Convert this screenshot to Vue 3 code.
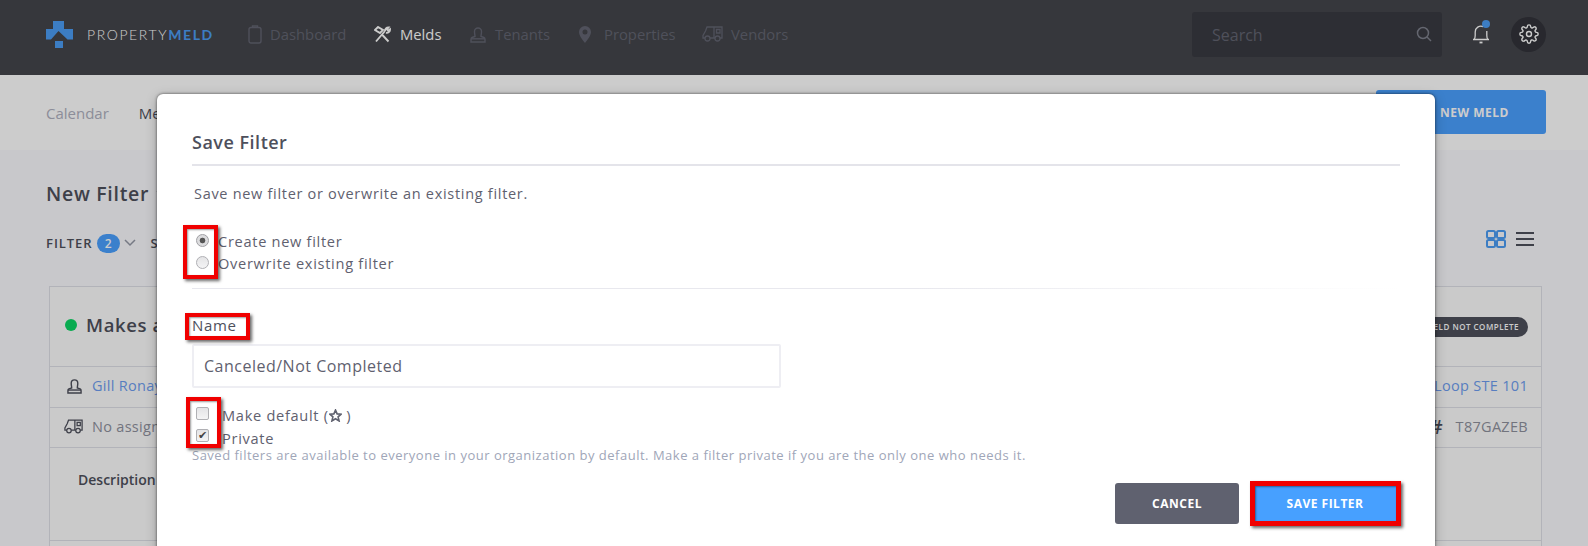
<script setup>
const nav = [
  { label: 'Dashboard', icon: 'clip', active: false },
  { label: 'Melds', icon: 'tools', active: true },
  { label: 'Tenants', icon: 'person', active: false },
  { label: 'Properties', icon: 'pin', active: false },
  { label: 'Vendors', icon: 'truck', active: false }
]
</script>

<template>
  <div class="screen">
    <header class="topbar">
      <div class="brand">
        <svg class="logo" width="27" height="27" viewBox="0 0 27 27">
          <path fill="#4c9df4" d="M7 0h11v8l9 0v10.500h-5.500L12.500 10 5 18.500H0V8h7z" />
          <path fill="#4c9df4" d="M9 20h8v7H9z" />
        </svg>
        <span class="wordmark">PROPERTY<b>MELD</b></span>
      </div>
      <nav class="mainnav">
        <a v-for="item in nav" :key="item.label" class="navlink" :class="[{ active: item.active }, 'nav-' + item.icon]">
          <svg v-if="item.icon === 'clip'" width="14" height="19" viewBox="0 0 14 19" fill="none" stroke="currentColor" stroke-width="1.400">
            <rect x="1" y="2.500" width="12" height="15.500" rx="2" /><path d="M4.500 2.500V1h5v1.500" />
          </svg>
          <svg v-else-if="item.icon === 'tools'" width="17" height="17" viewBox="0 0 17 17" fill="none" stroke="currentColor" stroke-width="1.900">
            <path d="M2 15.500 11 5M1 4l3-3 5 3-3 3zM14.500 15.500 7.500 8M11 5c0-2 1.500-3.500 3.500-3.500L13 3.500 14.200 4.800 16 3.300c.2 2.200-2 4-4 3.400" />
          </svg>
          <svg v-else-if="item.icon === 'person'" width="16" height="17" viewBox="0 0 16 17" fill="none" stroke="currentColor" stroke-width="1.400">
            <path d="M5 10.500c0-1.500-.5-2.500-.5-5a3.500 3.500 0 0 1 7 0c0 2.500-.5 3.500-.5 5l3 1c.9.300 1 1 1 2V16H1v-2.500c0-1 .1-1.700 1-2z" />
            <path d="M1 12.800h14" />
          </svg>
          <svg v-else-if="item.icon === 'pin'" width="12" height="17" viewBox="0 0 12 17">
            <path fill="currentColor" fill-rule="evenodd" d="M6 0a6 6 0 0 1 6 6c0 3.500-3.500 8-6 11C3.500 14 0 9.500 0 6a6 6 0 0 1 6-6zm0 3.500a2.500 2.500 0 1 0 0 5 2.500 2.500 0 0 0 0-5z" />
          </svg>
          <svg v-else width="21" height="16" viewBox="0 0 21 16" fill="none" stroke="currentColor" stroke-width="1.300">
            <path d="M3 12H1v-2.500L3.500 5l1.500-4h7v11H8M12 12h1M18 12h2V1h-8" />
            <circle cx="5.500" cy="12.500" r="2.500" /><circle cx="15.500" cy="12.500" r="2.500" />
            <path d="M14.500 3.500H18V7h-3.500z" />
          </svg>
          <span>{{ item.label }}</span>
        </a>
      </nav>
      <div class="search">
        <span>Search</span>
        <svg width="16" height="16" viewBox="0 0 16 16" fill="none" stroke="#7d808c" stroke-width="1.500">
          <circle cx="7" cy="7" r="5.500" /><path d="M11 11l4 4" />
        </svg>
      </div>
      <div class="bell">
        <svg width="18" height="22" viewBox="0 0 18 22" fill="none" stroke="#ffffff" stroke-width="1.300">
          <path d="M2 16.500c1-1 1.200-2 1.200-4V9a5.800 5.800 0 0 1 8-5.400M14.800 8v4.500c0 2 .2 3 1.200 4M1 16.500h16" />
          <path d="M7.500 19.500h3" stroke-width="1.800" />
        </svg>
        <i class="dot"></i>
      </div>
      <div class="gear">
        <svg width="20" height="20" viewBox="0 0 24 24" fill="none" stroke="#ffffff" stroke-width="1.700" stroke-linejoin="round">
          <circle cx="12" cy="12" r="3" />
          <path d="M19.400 15a1.700 1.700 0 0 0 .3 1.800l.1.100a2 2 0 1 1-2.800 2.800l-.1-.1a1.700 1.700 0 0 0-2.900 1.200V21a2 2 0 1 1-4 0v-.1a1.700 1.700 0 0 0-2.900-1.200l-.1.100a2 2 0 1 1-2.800-2.800l.1-.1a1.700 1.700 0 0 0-1.200-2.900H3a2 2 0 1 1 0-4h.1a1.700 1.700 0 0 0 1.200-2.900l-.1-.1a2 2 0 1 1 2.800-2.800l.1.100a1.700 1.700 0 0 0 1.900.3H9a1.700 1.700 0 0 0 1-1.500V3a2 2 0 1 1 4 0v.1a1.700 1.700 0 0 0 2.900 1.200l.1-.1a2 2 0 1 1 2.800 2.800l-.1.100a1.700 1.700 0 0 0-.3 1.900V9a1.700 1.700 0 0 0 1.500 1H21a2 2 0 1 1 0 4h-.1a1.700 1.700 0 0 0-1.500 1z" />
        </svg>
      </div>
    </header>

    <div class="subbar">
      <a class="sublink">Calendar</a>
      <a class="sublink current">Melds</a>
      <button class="newmeld">NEW MELD</button>
    </div>

    <main class="page">
      <div class="titlerow">
        <h2 class="pagetitle">New Filter</h2>
        <svg width="12" height="8" viewBox="0 0 12 8" fill="none" stroke="#9498a6" stroke-width="1.500"><path d="M1 1l5 5 5-5" /></svg>
      </div>
      <div class="tools">
        <span class="filter">FILTER</span>
        <span class="count">2</span>
        <svg width="12" height="8" viewBox="0 0 12 8" fill="none" stroke="#9498a6" stroke-width="1.500"><path d="M1 1l5 5 5-5" /></svg>
        <span class="filter sort">SORT</span>
        <svg class="grid" width="20" height="18" viewBox="0 0 20 18" fill="none" stroke="#4c9df4" stroke-width="2">
          <rect x="1" y="1" width="8" height="7" rx="1.500" /><rect x="11" y="1" width="8" height="7" rx="1.500" />
          <rect x="1" y="10" width="8" height="7" rx="1.500" /><rect x="11" y="10" width="8" height="7" rx="1.500" />
        </svg>
        <svg class="lines" width="18" height="14" viewBox="0 0 18 14" stroke="#4e505c" stroke-width="2"><path d="M0 1h18M0 7h18M0 13h18" /></svg>
      </div>
      <section class="card">
        <div class="cardhead">
          <i class="status"></i>
          <span class="cardtitle">Makes a</span>
          <span class="pill">MELD NOT COMPLETE</span>
        </div>
        <div class="cardrow">
          <svg width="15" height="16" viewBox="0 0 16 17" fill="none" stroke="#4e505c" stroke-width="1.500">
            <path d="M5 10.500c0-1.500-.5-2.500-.5-5a3.500 3.500 0 0 1 7 0c0 2.500-.5 3.500-.5 5l3 1c.9.300 1 1 1 2V16H1v-2.500c0-1 .1-1.700 1-2z" /><path d="M1 12.800h14" />
          </svg>
          <a class="rowlink">Gill Ronay</a>
          <a class="rowlink end">1200 Loop STE 101</a>
        </div>
        <div class="cardrow">
          <svg class="van" width="19" height="15" viewBox="0 0 21 16" fill="none" stroke="#4e505c" stroke-width="1.400">
            <path d="M3 12H1v-2.500L3.500 5l1.500-4h7v11H8M12 12h1M18 12h2V1h-8" />
            <circle cx="5.500" cy="12.500" r="2.500" /><circle cx="15.500" cy="12.500" r="2.500" />
            <path d="M14.500 3.500H18V7h-3.500z" />
          </svg>
          <span class="rowmuted">No assigned vendor</span>
          <span class="hash">#</span>
          <span class="ref">T87GAZEB</span>
        </div>
        <div class="carddesc">Description</div>
      </section>
    </main>

    <div class="overlay"></div>

    <div class="modal">
      <h3 class="modaltitle">Save Filter</h3>
      <p class="intro">Save new filter or overwrite an existing filter.</p>
      <div class="choices">
        <label class="choice"><input type="radio" name="mode" checked /><span>Create new filter</span></label>
        <label class="choice"><input type="radio" name="mode" /><span>Overwrite existing filter</span></label>
      </div>
      <div class="fade"></div>
      <label class="namelabel">Name</label>
      <input class="nameinput" type="text" value="Canceled/Not Completed" />
      <div class="checks">
        <label class="check">
          <input type="checkbox" />
          <span>Make default (<svg class="star" width="13" height="13" viewBox="0 0 24 24" fill="none" stroke="#5f616f" stroke-width="3"><path d="M12 2l3 7 7.500.6-5.700 4.900 1.800 7.500L12 18l-6.600 4 1.800-7.500L1.500 9.600 9 9z" /></svg> )</span>
        </label>
        <label class="check">
          <input type="checkbox" checked />
          <span>Private</span>
        </label>
      </div>
      <p class="help">Saved filters are available to everyone in your organization by default. Make a filter private if you are the only one who needs it.</p>
      <div class="actions">
        <button class="btn cancel">CANCEL</button>
        <button class="btn save">SAVE FILTER</button>
      </div>
      <i class="mark mark-radio"></i>
      <i class="mark mark-name"></i>
      <i class="mark mark-check"></i>
      <i class="mark mark-save"></i>
    </div>
  </div>
</template>

<style>
html, body { margin: 0; padding: 0; background: #fff; }
</style>

<style scoped>
.screen {
  position: relative;
  width: 1588px;
  height: 546px;
  overflow: hidden;
  background: #fafbfe;
  font-family: "Open Sans", "Noto Sans", sans-serif;
  color: #5f616f;
}
.topbar {
  display: flex;
  align-items: center;
  height: 75px;
  padding: 0 42px 7px 46px;
  box-sizing: border-box;
  background: #44454b;
}
.brand { display: flex; align-items: center; width: 202px; }
.logo { display: block; margin-right: 14px; }
.wordmark {
  font-family: Lato, sans-serif;
  font-size: 14px;
  letter-spacing: 1.600px;
  color: #ffffff;
  font-weight: 300;
}
.wordmark b { color: #4c9df4; font-weight: 700; }
.mainnav { display: flex; align-items: center; flex: 1; }
.navlink {
  display: flex;
  align-items: center;
  font-size: 14.800px;
  color: #636572;
}
.navlink.active { color: #ffffff; }
.nav-clip { width: 126px; }
.nav-clip svg { margin-right: 8px; }
.nav-tools { width: 96px; }
.nav-tools svg { margin-right: 9px; }
.nav-person { width: 109px; }
.nav-person svg { margin-right: 9px; }
.nav-pin { width: 123px; }
.nav-pin svg { margin-right: 13px; }
.nav-truck svg { margin-right: 8px; }
.search {
  display: flex;
  align-items: center;
  justify-content: space-between;
  width: 250px;
  height: 45px;
  padding: 0 10px 0 20px;
  box-sizing: border-box;
  background: #393a41;
  border-radius: 3px;
  font-size: 16px;
  color: #636572;
  margin-right: 30px;
}
.search span { margin-top: 2px; }
.bell { position: relative; width: 18px; height: 22px; margin-right: 21px; }
.bell svg { display: block; }
.dot {
  position: absolute;
  top: -3px;
  right: 0;
  width: 8px;
  height: 8px;
  border-radius: 50%;
  background: #4c9df4;
}
.gear {
  display: flex;
  align-items: center;
  justify-content: center;
  width: 35px;
  height: 35px;
  border-radius: 50%;
  background: #32333a;
}
.subbar {
  display: flex;
  align-items: center;
  height: 75px;
  padding: 0 42px 0 46px;
  box-sizing: border-box;
  background: #ffffff;
}
.sublink { font-size: 15px; color: #afb1c0; margin-right: 30px; }
.sublink.current { color: #4e505c; }
.newmeld {
  margin-left: auto;
  margin-top: -1px;
  width: 170px;
  height: 44px;
  border: 0;
  border-radius: 3px;
  background: #4aa0ff;
  color: #fff;
  font: 700 12px "Open Sans", sans-serif;
  letter-spacing: .5px;
  text-align: right;
  padding: 0 37px 0 0;
}
.page { padding: 0 46px; }
.titlerow {
  display: flex;
  align-items: center;
  gap: 7px;
  padding-top: 31px;
}
.pagetitle {
  margin: 0;
  font-size: 19.500px;
  line-height: 26px;
  font-weight: 600;
  color: #4e505c;
  letter-spacing: .7px;
}
.tools {
  display: flex;
  align-items: center;
  gap: 4px;
  margin-top: 25px;
  height: 22px;
  padding-right: 8px;
}
.filter { font-size: 13px; font-weight: 600; letter-spacing: .95px; color: #4e505c; }
.sort { margin-left: 11px; }
.count {
  width: 23px;
  height: 19px;
  border-radius: 10px;
  background: #4aa0ff;
  color: #fff;
  font-size: 12px;
  font-weight: 600;
  line-height: 19px;
  text-align: center;
}
.grid { margin-left: auto; margin-right: 6px; margin-bottom: 8px; }
.lines { margin-bottom: 8px; }
.card {
  margin: 32px 0 0 3px;
  padding-bottom: 60px;
  border: 1px solid #dfe0e8;
  box-sizing: border-box;
  background: #fdfdfd;
}
.cardhead {
  display: flex;
  align-items: center;
  height: 80px;
  padding: 0 13px 4px 15px;
  box-sizing: border-box;
  border-bottom: 1px solid #dfe0e8;
}
.status { width: 12px; height: 12px; border-radius: 50%; background: #0cd664; margin-right: 9px; }
.cardtitle { font-size: 18.500px; font-weight: 600; color: #4e505c; letter-spacing: .6px; }
.pill {
  margin-left: auto;
  margin-top: 4px;
  height: 20px;
  padding: 0 9px;
  border-radius: 10px;
  background: #4e505c;
  color: #fff;
  font-size: 8px;
  font-weight: 600;
  line-height: 20px;
  letter-spacing: .5px;
}
.cardrow {
  display: flex;
  align-items: center;
  height: 40.500px;
  padding: 0 13px 2px 17px;
  border-bottom: 1px solid #dfe0e8;
  box-sizing: border-box;
  font-size: 14.500px;
}
.cardrow svg { margin-right: 10px; }
.cardrow .van { margin-left: -3px; margin-right: 9px; }
.rowlink { color: #6e9df0; letter-spacing: .3px; }
.rowlink.end { margin-left: auto; }
.rowmuted { color: #8f919d; letter-spacing: .3px; }
.hash { margin-left: auto; margin-right: 13px; font-size: 20px; font-weight: 600; color: #4e505c; }
.ref { color: #8f919d; letter-spacing: .3px; }
.carddesc {
  height: 93px;
  padding: 22px 0 0 28px;
  box-sizing: border-box;
  border-bottom: 1px solid #dfe0e8;
  font-size: 14px;
  font-weight: 600;
  color: #4e505c;
}
.overlay {
  position: absolute;
  inset: 0;
  background: rgba(0, 0, 0, .2);
}
.modal {
  position: absolute;
  left: 157px;
  top: 94px;
  width: 1278px;
  height: 500px;
  padding: 0 35px;
  box-sizing: border-box;
  background: #ffffff;
  border-radius: 6px 6px 0 0;
  box-shadow: 0 0 3px rgba(0, 0, 0, .6), 0 3px 12px rgba(0, 0, 0, .25);
}
.modaltitle {
  margin: 0;
  height: 72px;
  box-sizing: border-box;
  padding-top: 34px;
  font-size: 18px;
  line-height: 28px;
  font-weight: 600;
  letter-spacing: .5px;
  color: #4e505c;
  border-bottom: 2px solid #e4e4ea;
}
.intro {
  margin: 17px 0 0 2px;
  font-size: 14.500px;
  line-height: 22px;
  letter-spacing: .7px;
  color: #5f616f;
}
.choices { margin-top: 25px; }
.choice {
  display: flex;
  align-items: center;
  height: 21.800px;
  font-size: 14.600px;
  letter-spacing: .7px;
  color: #5f616f;
}
.choice input {
  appearance: none;
  width: 13px;
  height: 13px;
  margin: 0 9px 0 4px;
  flex: none;
  border: 1px solid #b0b0b4;
  border-radius: 50%;
  background: linear-gradient(#e4e4e6, #f4f4f5);
  box-sizing: border-box;
}
.choice input:checked {
  background: radial-gradient(circle, #555 0, #555 2.500px, #dcdcde 3.200px);
  border-color: #a0a0a4;
}
.fade {
  height: 1px;
  margin-top: 14px;
  background: linear-gradient(90deg, #e8e8ee, #e8e8ee 60%, #ffffff);
}
.namelabel {
  display: block;
  margin-top: 26px;
  font-size: 15px;
  line-height: 20px;
  letter-spacing: .7px;
  color: #4e505c;
}
.nameinput {
  display: block;
  width: 589px;
  height: 44px;
  margin-top: 9px;
  padding: 0 10px;
  box-sizing: border-box;
  border: 2px solid #eeeef3;
  border-radius: 2px;
  outline: 0;
  font: 16px "Open Sans", sans-serif;
  letter-spacing: .5px;
  color: #5f616f;
}
.checks { margin-top: 15px; }
.check {
  display: flex;
  align-items: center;
  height: 22px;
  font-size: 14.600px;
  letter-spacing: .7px;
  color: #5f616f;
}
.check span { margin-top: 2px; }
.check + .check span { margin-top: 4px; }
.check input {
  appearance: none;
  position: relative;
  width: 13px;
  height: 13px;
  margin: 0 13px 0 4px;
  flex: none;
  border: 1px solid #b0b0b4;
  border-radius: 2px;
  background: linear-gradient(#e4e4e6, #f4f4f5);
  box-sizing: border-box;
}
.check input:checked::after {
  content: "✔";
  position: absolute;
  left: 0;
  top: 0;
  width: 11px;
  height: 11px;
  font: 11px/11px "DejaVu Sans", sans-serif;
  text-align: center;
  color: #444;
}
.star { vertical-align: -1px; }
.help {
  margin: 0;
  font-size: 13px;
  line-height: 17px;
  letter-spacing: .5px;
  color: #a0a6b8;
}
.actions {
  display: flex;
  justify-content: flex-end;
  gap: 16px;
  margin-top: 19px;
  padding-right: 2px;
}
.btn {
  height: 41px;
  border: 0;
  border-radius: 3px;
  color: #fff;
  font: 700 12px "Open Sans", sans-serif;
  letter-spacing: .5px;
}
.cancel { width: 124px; background: #5f616f; }
.save { width: 143px; padding-right: 9px; background: #47a0ff; }
.mark {
  position: absolute;
  display: block;
  box-sizing: border-box;
  border: 4px solid #f00000;
  box-shadow: 2px 2px 3px rgba(0, 0, 0, .6), inset 1px 1px 2px rgba(0, 0, 0, .4);
}
.mark-radio { left: 26px; top: 131px; width: 35px; height: 54px; }
.mark-name { left: 28px; top: 219px; width: 65px; height: 27px; }
.mark-check { left: 29px; top: 303px; width: 35px; height: 51px; }
.mark-save { left: 1093px; top: 387px; width: 151px; height: 45px; border-width: 5px; }
</style>
